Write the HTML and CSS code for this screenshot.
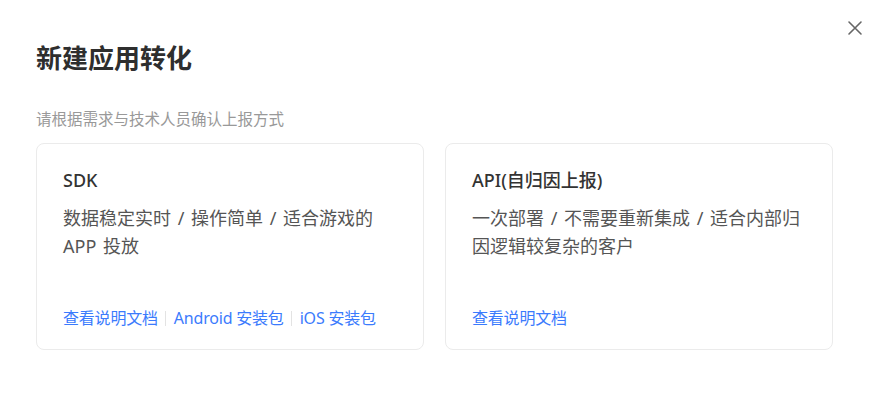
FILE: index.html
```html
<!DOCTYPE html>
<html lang="zh-CN">
<head>
<meta charset="utf-8">
<title>新建应用转化</title>
<link rel="stylesheet" href="styles.css">
</head>
<body>
<div class="dialog">
  <button class="close" aria-label="关闭">
    <svg width="16" height="16" viewBox="0 0 16 16"><path d="M2 2L14 14M14 2L2 14" stroke="#666" stroke-width="1.6" stroke-linecap="round" fill="none"/></svg>
  </button>
  <h1 class="title">新建应用转化</h1>
  <p class="subtitle">请根据需求与技术人员确认上报方式</p>
  <div class="cards">
    <div class="card">
      <div class="card-title">SDK</div>
      <div class="card-desc">数据稳定实时 / 操作简单 / 适合游戏的<br>APP 投放</div>
      <div class="links">
        <a class="link" href="#">查看说明文档</a><span class="sep"></span><a class="link" href="#">Android 安装包</a><span class="sep"></span><a class="link" href="#">iOS 安装包</a>
      </div>
    </div>
    <div class="card">
      <div class="card-title">API(自归因上报)</div>
      <div class="card-desc">一次部署 / 不需要重新集成 / 适合内部归<br>因逻辑较复杂的客户</div>
      <div class="links">
        <a class="link" href="#">查看说明文档</a>
      </div>
    </div>
  </div>
</div>
</body>
</html>
```

FILE: styles.css
```css
html, body {
  margin: 0;
  padding: 0;
  background: #fff;
}
body {
  font-family: "Noto Sans", "Noto Sans CJK SC", sans-serif;
  color: #333;
}
.dialog {
  position: relative;
  width: 879px;
  height: 393px;
  box-sizing: border-box;
  padding: 40px 0 0 36px;
}
.close {
  position: absolute;
  top: 20px;
  left: 847px;
  width: 16px;
  height: 16px;
  padding: 0;
  border: 0;
  background: transparent;
  display: flex;
}
.title {
  margin: 0;
  font-size: 26px;
  line-height: 36px;
  font-weight: 700;
  color: #2e2e2e;
}
.subtitle {
  margin: 32px 0 0;
  font-size: 15.5px;
  line-height: 22px;
  color: #999;
}
.cards {
  display: flex;
  gap: 21px;
  margin-top: 13px;
}
.card {
  width: 388px;
  height: 207px;
  box-sizing: border-box;
  border: 1px solid #ebebeb;
  border-radius: 8px;
  padding: 23px 26px 20px;
  display: flex;
  flex-direction: column;
}
.card-title {
  font-size: 18px;
  line-height: 26px;
  font-weight: 500;
  color: #333;
}
.card-desc {
  margin-top: 11px;
  font-size: 18px;
  line-height: 28px;
  color: #555;
  word-spacing: 2px;
}
.links {
  margin-top: auto;
  display: flex;
  align-items: center;
  font-size: 16px;
  line-height: 22px;
}
.link {
  color: #3b7bfd;
  text-decoration: none;
  letter-spacing: -0.2px;
}
.sep {
  width: 1px;
  height: 15px;
  background: #e3e3e3;
  margin: 0 8px 0 7px;
}
```
